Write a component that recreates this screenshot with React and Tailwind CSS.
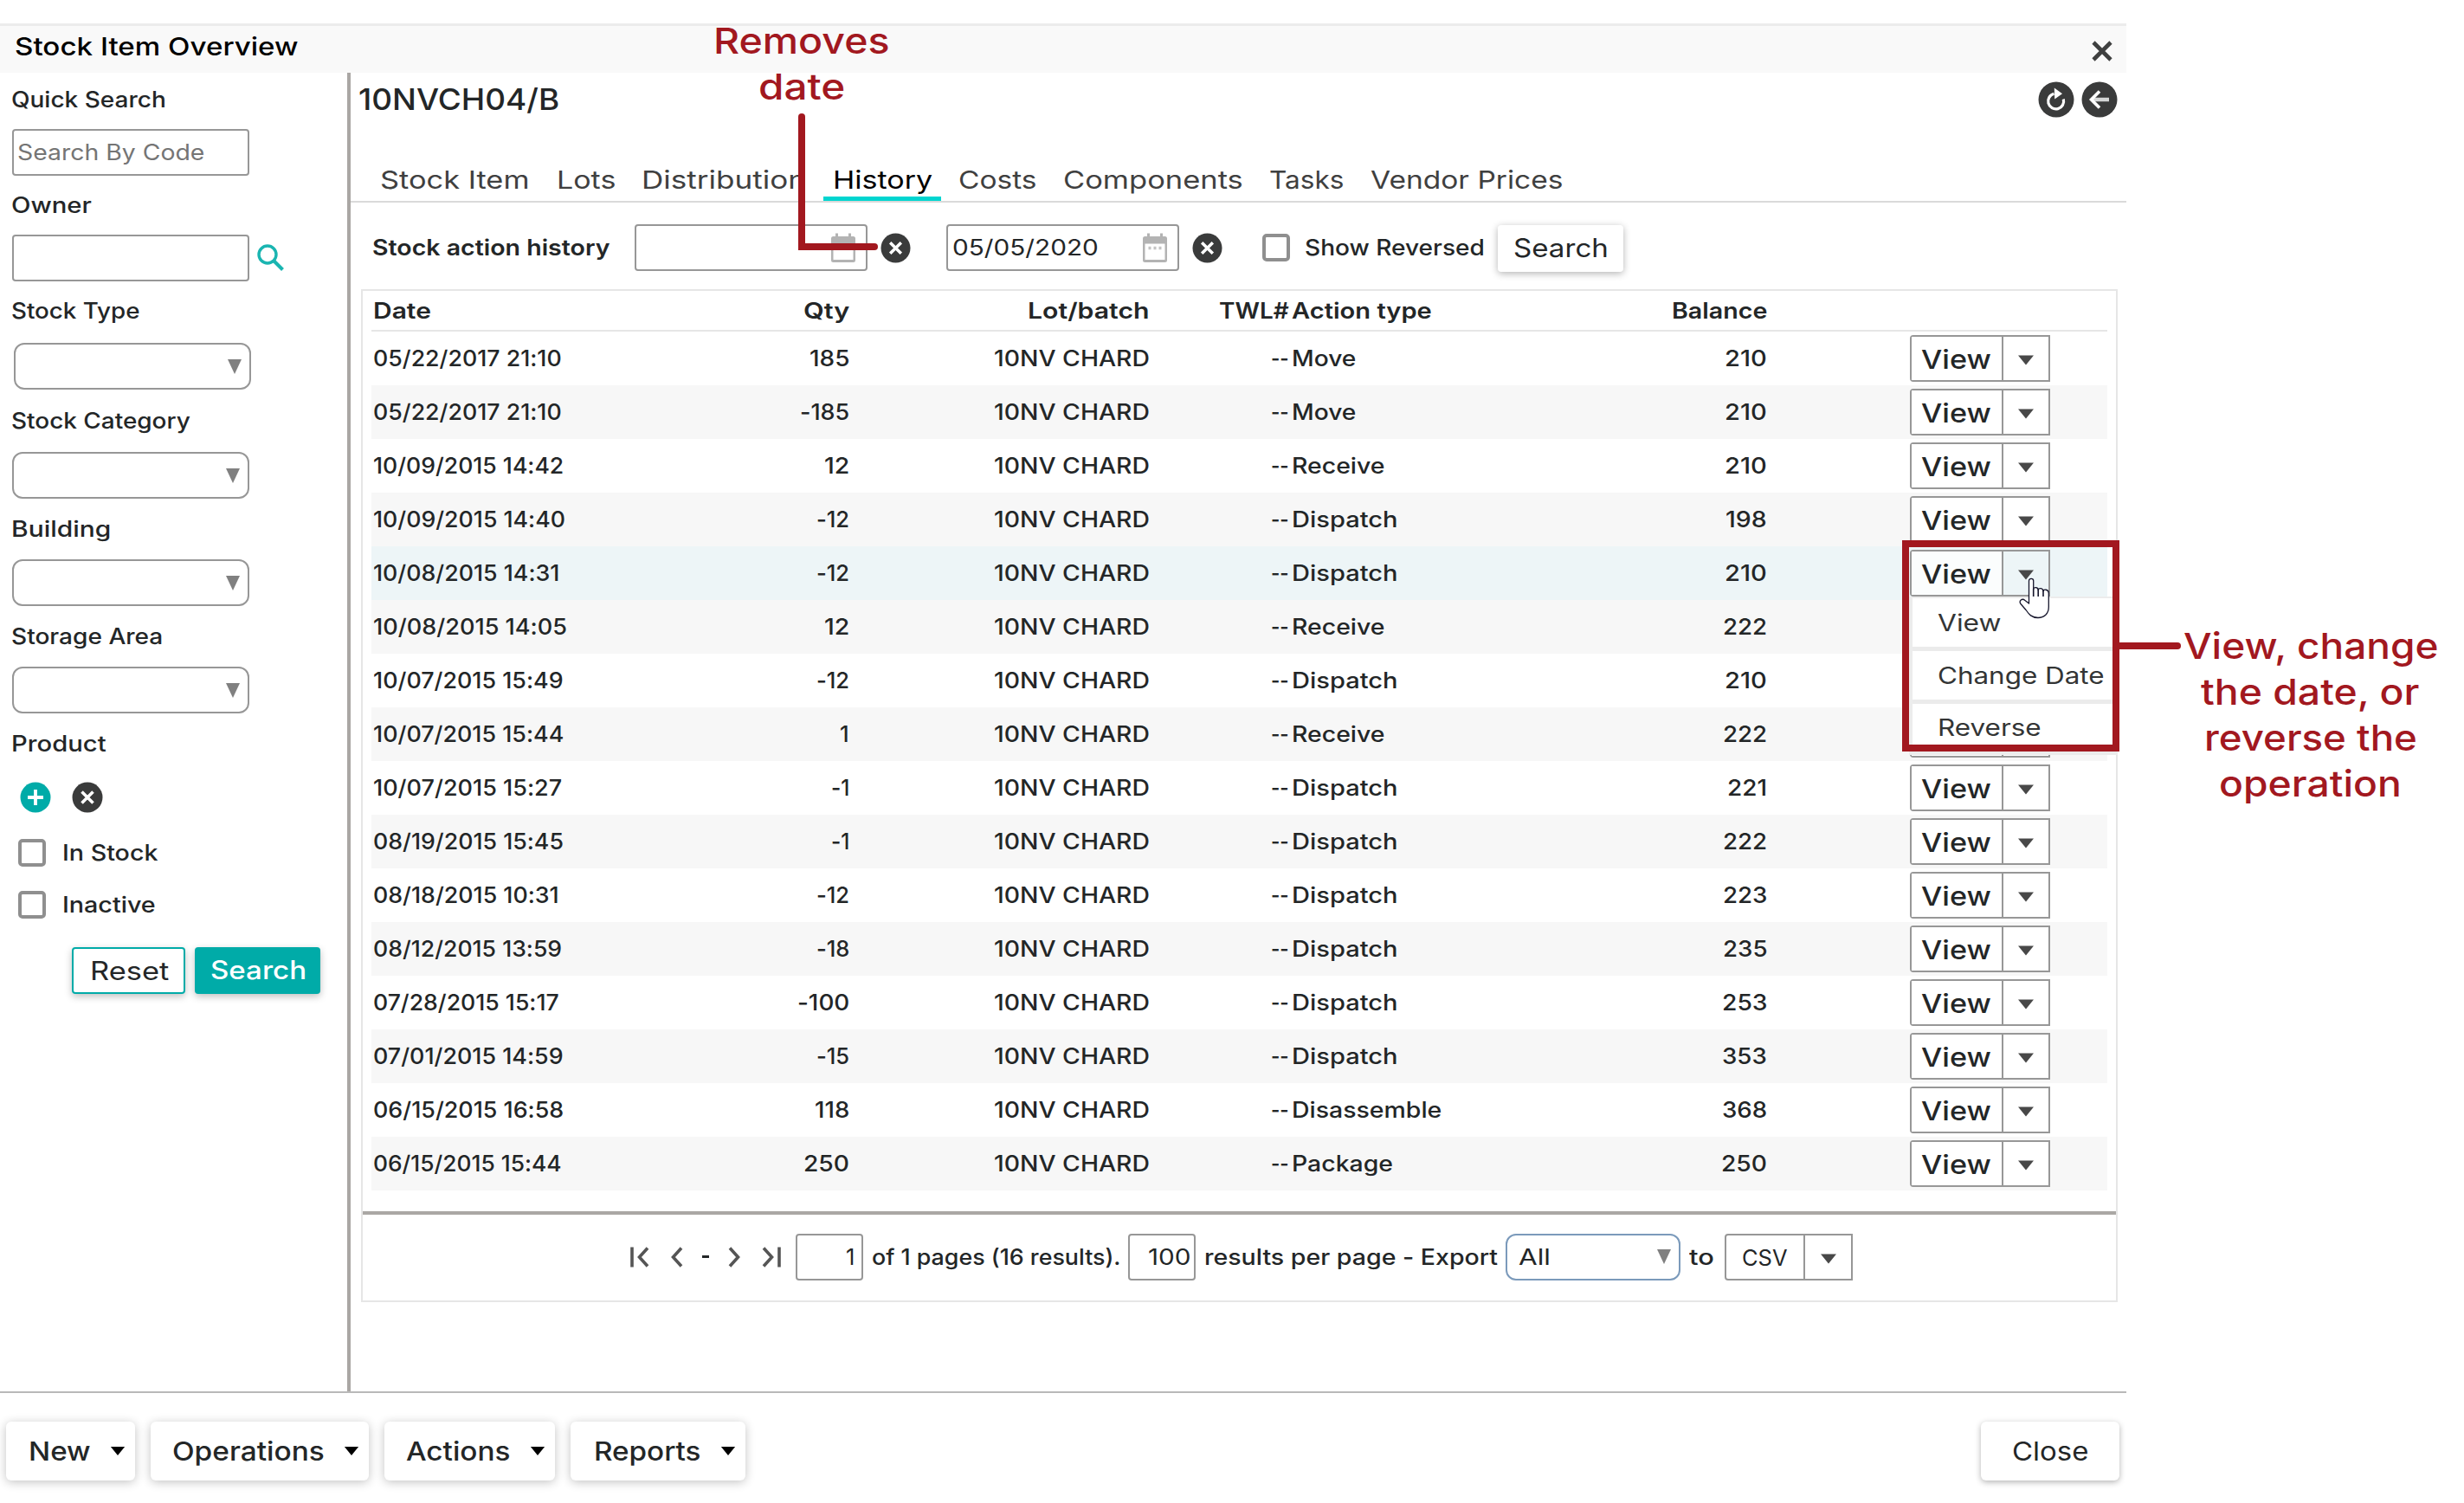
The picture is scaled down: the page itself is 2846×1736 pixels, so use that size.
import React, { useLayoutEffect, useRef, useState } from 'react';

const dateWidths = { a: 215, b: 217, c: 219, d: 212, e: 221 };

const rows = [
  { date: '05/22/2017 21:10', dw: dateWidths.a, qty: '185', type: 'Move', balance: '210' },
  { date: '05/22/2017 21:10', dw: dateWidths.a, qty: '-185', type: 'Move', balance: '210' },
  { date: '10/09/2015 14:42', dw: dateWidths.b, qty: '12', type: 'Receive', balance: '210' },
  { date: '10/09/2015 14:40', dw: dateWidths.c, qty: '-12', type: 'Dispatch', balance: '198' },
  { date: '10/08/2015 14:31', dw: dateWidths.d, qty: '-12', type: 'Dispatch', balance: '210', active: true },
  { date: '10/08/2015 14:05', dw: dateWidths.e, qty: '12', type: 'Receive', balance: '222', covered: true },
  { date: '10/07/2015 15:49', dw: dateWidths.b, qty: '-12', type: 'Dispatch', balance: '210', covered: true },
  { date: '10/07/2015 15:44', dw: dateWidths.b, qty: '1', type: 'Receive', balance: '222', covered: true },
  { date: '10/07/2015 15:27', dw: dateWidths.a, qty: '-1', type: 'Dispatch', balance: '221' },
  { date: '08/19/2015 15:45', dw: dateWidths.b, qty: '-1', type: 'Dispatch', balance: '222' },
  { date: '08/18/2015 10:31', dw: dateWidths.d, qty: '-12', type: 'Dispatch', balance: '223' },
  { date: '08/12/2015 13:59', dw: dateWidths.a, qty: '-18', type: 'Dispatch', balance: '235' },
  { date: '07/28/2015 15:17', dw: dateWidths.d, qty: '-100', type: 'Dispatch', balance: '253' },
  { date: '07/01/2015 14:59', dw: dateWidths.b, qty: '-15', type: 'Dispatch', balance: '353' },
  { date: '06/15/2015 16:58', dw: dateWidths.b, qty: '118', type: 'Disassemble', balance: '368' },
  { date: '06/15/2015 15:44', dw: dateWidths.a, qty: '250', type: 'Package', balance: '250' }
];

const textWidths = {
  Move: 71, Receive: 104, Dispatch: 120, Disassemble: 170, Package: 114,
  '185': 43, '-185': 54, '12': 26, '-12': 35, '1': 8, '-1': 18, '-18': 35, '-100': 57, '-15': 35, '118': 37, '250': 50,
  '210': 46, '198': 45, '222': 48, '221': 43, '223': 48, '235': 48, '253': 49, '353': 49, '368': 49
};

const tabs = [
  { label: 'Stock Item', w: 170 },
  { label: 'Lots', w: 65 },
  { label: 'Distribution', w: 187 },
  { label: 'History', w: 112, active: true },
  { label: 'Costs', w: 87 },
  { label: 'Components', w: 205 },
  { label: 'Tasks', w: 83 },
  { label: 'Vendor Prices', w: 220 }
];

// Widens the letters so the text takes w pixels
function Fit({ w, children }) {
  const ref = useRef(null);
  const [scale, setScale] = useState(1);

  useLayoutEffect(() => {
    if (children.length > 1) {
      setScale((w + 3) / ref.current.offsetWidth);
    }
  }, []);

  return (
    <span className="inline-flex shrink-0 whitespace-nowrap text-left" style={{ width: w }}>
      <span ref={ref} className="inline-block shrink-0 origin-left -ml-px" style={{ transform: `scaleX(${scale})` }}>
        {children}
      </span>
    </span>
  );
}

function Caret({ className = '' }) {
  return (
    <svg viewBox="0 0 20 12" className={`h-3 shrink-0 ${className}`}>
      <path d="M1 0.5H19L10 11.5Z" fill="currentColor" />
    </svg>
  );
}

function SelectArrow() {
  return (
    <svg viewBox="0 0 16 17" className="w-4 h-[17px] shrink-0 text-[#808080]">
      <path d="M0 0H16L8 17Z" fill="currentColor" />
    </svg>
  );
}

function SelectBox({ className = '' }) {
  return (
    <div className={`w-[274px] h-[54px] border-2 border-[#979797] rounded-xl flex items-center justify-end pr-[9px] ${className}`}>
      <SelectArrow />
    </div>
  );
}

function CheckBox() {
  return <div className="w-8 h-8 shrink-0 border-4 border-[#8f8f8f] rounded-[5px] bg-white" />;
}

function CircleX({ className = '' }) {
  return (
    <svg viewBox="0 0 36 36" className={`shrink-0 ${className}`}>
      <circle cx="18" cy="18" r="17.5" fill="#3a3b3b" />
      <path d="M11.5 11.5L24.5 24.5M24.5 11.5L11.5 24.5" stroke="#fff" strokeWidth="3.6" />
    </svg>
  );
}

function Calendar() {
  return (
    <svg viewBox="0 0 28 34" className="w-7 h-[34px] shrink-0">
      <path d="M5 0.5H8V4H20V0.5H23V4H25.5A2.5 2.5 0 0 1 28 6.5V31.5A2.5 2.5 0 0 1 25.5 34H2.5A2.5 2.5 0 0 1 0 31.5V6.5A2.5 2.5 0 0 1 2.5 4H5Z" fill="#b3b3b3" />
      <path d="M2.5 12.5H25.5V31H2.5Z" fill="#fff" />
      <path d="M6.5 17.5H9.5M12.5 17.5H15.5M18.5 17.5H21.5" stroke="#c4c4c4" strokeWidth="3.5" />
    </svg>
  );
}

function DateField({ value }) {
  return (
    <div className="w-[269px] h-[54px] border-2 border-[#979797] rounded-[4px] flex items-center pl-1.5 pr-3 text-[25.5px]">
      {value && <Fit w={166}>{value}</Fit>}
      <div className="ml-auto">
        <Calendar />
      </div>
    </div>
  );
}

function SplitButton({ active, covered }) {
  return (
    <div className={`w-[162px] h-[54px] border-2 border-[#979797] rounded-l-[4px] flex ${active ? 'bg-[#edf5f7]' : 'bg-white'}`}>
      <div className={`w-[106px] h-[50px] pl-3 pt-0.5 flex items-center border-r-2 border-[#979797] text-[30px] font-medium ${active ? 'bg-[#fbfdfd]' : 'bg-white'}`}>
        {!covered && <Fit w={78}>View</Fit>}
      </div>
      <div className="flex-1 flex items-center justify-center pt-[3px]">
        <Caret className="w-5 text-[#484848]" />
      </div>
    </div>
  );
}

function Sidebar() {
  return (
    <div className="w-[405px] shrink-0 border-r-4 border-[#aaa7a4] pl-3.5 text-[25.5px] font-medium">
      <div className="h-[65px] pb-[3px] flex items-center"><Fit w={176}>Quick Search</Fit></div>
      <div className="w-[274px] h-[54px] border-2 border-[#979797] rounded-[4px] flex items-center pl-[5px] text-[#757575] font-normal">
        <Fit w={213}>Search By Code</Fit>
      </div>
      <div className="h-[68px] pb-px flex items-center"><Fit w={90}>Owner</Fit></div>
      <div className="flex items-center">
        <div className="w-[274px] h-[54px] border-2 border-[#979797] rounded-[4px]" />
        <svg viewBox="0 0 32 32" className="w-8 h-8 ml-[9px] text-[#1ab5b1]" fill="none" stroke="currentColor">
          <circle cx="12" cy="12" r="10" strokeWidth="3.4" />
          <path d="M19.5 19.5L29.5 29.5" strokeWidth="4" />
        </svg>
      </div>
      <div className="h-[71px] pb-[3px] flex items-center"><Fit w={146}>Stock Type</Fit></div>
      <SelectBox className="ml-[2px]" />
      <div className="h-[72px] flex items-center"><Fit w={204}>Stock Category</Fit></div>
      <SelectBox />
      <div className="h-[70px] flex items-center"><Fit w={112}>Building</Fit></div>
      <SelectBox />
      <div className="h-[70px] flex items-center"><Fit w={172}>Storage Area</Fit></div>
      <SelectBox />
      <div className="h-[70px] flex items-center"><Fit w={107}>Product</Fit></div>
      <div className="flex mt-[9px] ml-[9px] gap-6">
        <svg viewBox="0 0 36 36" className="w-9 h-9">
          <circle cx="18" cy="18" r="17.5" fill="#00aba8" />
          <path d="M18 9V27M9 18H27" stroke="#fff" strokeWidth="3.8" />
        </svg>
        <CircleX className="w-9 h-9" />
      </div>
      <div className="flex items-center h-8 mt-[30px] ml-[7px] gap-5"><CheckBox /><Fit w={107}>In Stock</Fit></div>
      <div className="flex items-center h-8 mt-[28px] ml-[7px] gap-5"><CheckBox /><Fit w={105}>Inactive</Fit></div>
      <div className="flex mt-[33px] ml-[69px] gap-[11px] text-[29.5px]">
        <div className="w-[131px] h-[54px] rounded-[4px] border-2 border-[#00aba8] flex items-center justify-center pt-0.5 font-normal shadow-[0_3px_8px_rgba(0,0,0,0.25)]">
          <Fit w={88}>Reset</Fit>
        </div>
        <div className="w-[145px] h-[54px] rounded-[4px] bg-[#00aba8] text-white flex items-center justify-center shadow-[0_3px_8px_rgba(0,0,0,0.25)]">
          <Fit w={108}>Search</Fit>
        </div>
      </div>
    </div>
  );
}

function HistoryTable() {
  return (
    <div className="px-2.5 h-[1063px] text-[25.5px] font-medium">
      <div className="h-[47px] border-b-2 border-[#e6e6e6] grid grid-cols-[350px_200px_347px_161px_356px_196px_394px] items-center font-semibold">
        <div className="flex pl-[3px]"><Fit w={64}>Date</Fit></div>
        <div className="flex justify-end"><Fit w={50}>Qty</Fit></div>
        <div className="flex justify-end"><Fit w={138}>Lot/batch</Fit></div>
        <div className="flex justify-end"><Fit w={78}>TWL#</Fit></div>
        <div className="flex pl-1.5"><Fit w={159}>Action type</Fit></div>
        <div className="flex justify-end"><Fit w={107}>Balance</Fit></div>
      </div>
      {rows.map((row, i) => (
        <div
          key={i}
          className={`h-[62px] grid grid-cols-[350px_200px_347px_161px_356px_196px_394px] items-center ${row.active ? 'bg-[#edf5f7]' : i % 2 ? 'bg-[#f7f7f7]' : 'bg-white'}`}
        >
          <div className="flex pl-[3px]"><Fit w={row.dw}>{row.date}</Fit></div>
          <div className="flex justify-end"><Fit w={textWidths[row.qty]}>{row.qty}</Fit></div>
          <div className="flex justify-end"><Fit w={177}>10NV CHARD</Fit></div>
          <div className="flex justify-end"><Fit w={18}>--</Fit></div>
          <div className="flex pl-1.5"><Fit w={textWidths[row.type]}>{row.type}</Fit></div>
          <div className="flex justify-end"><Fit w={textWidths[row.balance]}>{row.balance}</Fit></div>
          <div className="pl-[167px]"><SplitButton active={row.active} covered={row.covered} /></div>
        </div>
      ))}
    </div>
  );
}

function Pagination() {
  return (
    <div className="h-[101px] border-t-4 border-[#aaa7a4] flex items-center pl-[309px] text-[25.5px] font-medium">
      <svg viewBox="0 0 22 24" className="w-[22px] h-6" fill="none" stroke="#555" strokeWidth="3.6">
        <path d="M2 0.5V23.5M20 1.5L10.5 12L20 22.5" />
      </svg>
      <svg viewBox="0 0 14 24" className="w-3.5 h-6 ml-[25px]" fill="none" stroke="#555" strokeWidth="3.6">
        <path d="M12 1.5L2.5 12L12 22.5" />
      </svg>
      <span className="w-[8px] h-[3px] bg-[#232627] ml-[22px]" />
      <svg viewBox="0 0 14 24" className="w-3.5 h-6 ml-[22px]" fill="none" stroke="#555" strokeWidth="3.6">
        <path d="M2 1.5L11.5 12L2 22.5" />
      </svg>
      <svg viewBox="0 0 22 24" className="w-[22px] h-6 ml-[25px]" fill="none" stroke="#555" strokeWidth="3.6">
        <path d="M20 0.5V23.5M2 1.5L11.5 12L2 22.5" />
      </svg>
      <div className="w-[78px] h-[54px] ml-[17px] border-2 border-[#979797] rounded-[4px] flex items-center justify-end pr-[9px] font-normal">
        <Fit w={8}>1</Fit>
      </div>
      <div className="ml-[11px] w-[295px] flex"><Fit w={284}>of 1 pages (16 results).</Fit></div>
      <div className="w-[78px] h-[54px] border-2 border-[#979797] rounded-[4px] flex items-center justify-end pr-[5px] font-normal">
        <Fit w={47}>100</Fit>
      </div>
      <div className="ml-[11px] w-[347px] flex"><Fit w={336}>results per page - Export</Fit></div>
      <div className="w-[202px] h-[54px] border-2 border-[#7b9abb] rounded-xl flex items-center justify-between pl-3.5 pr-[9px] font-normal">
        <Fit w={34}>All</Fit>
        <SelectArrow />
      </div>
      <div className="ml-[11px] w-10 flex"><Fit w={26}>to</Fit></div>
      <div className="w-[148px] h-[54px] border-2 border-[#979797] rounded-l-[4px] flex">
        <div className="w-[91px] border-r-2 border-[#979797] flex items-center pl-[19px] pt-[3px] text-[25px] font-normal">
          <Fit w={50}>CSV</Fit>
        </div>
        <div className="flex-1 flex items-center justify-center pt-1"><Caret className="w-5 text-[#484848]" /></div>
      </div>
    </div>
  );
}

function FooterButton({ label, w, className }) {
  return (
    <div className={`h-[68px] rounded-[6px] bg-white flex items-center justify-between pr-[11px] shadow-[0_2px_12px_rgba(0,0,0,0.24)] ${className}`}>
      <Fit w={w}>{label}</Fit>
      <Caret className="text-black w-[18px]" />
    </div>
  );
}

function ActionMenu() {
  return (
    <div className="absolute left-[2205px] top-[689px] w-[241px] h-[183px] bg-white border-t-2 border-b-4 border-l-4 border-[#ececec] text-[27px] text-[#333535]">
      <div className="h-[61px] pl-[30px] flex items-center border-b-[5px] border-[#ebebeb]"><Fit w={71}>View</Fit></div>
      <div className="h-[61px] pl-[30px] flex items-center border-b-[5px] border-[#ebebeb]"><Fit w={190}>Change Date</Fit></div>
      <div className="h-[55px] pl-[30px] flex items-center"><Fit w={117}>Reverse</Fit></div>
    </div>
  );
}

function App() {
  return (
    <div className="relative w-[2846px] h-[1736px] bg-white overflow-hidden text-[#232627] font-['Inter',sans-serif] leading-none [font-feature-settings:'calt'_0]">
      <div className="w-[2456px] flex flex-col pt-[27px]">
        <div className="h-[57px] border-t-[3px] border-[#ececec] bg-[#f9f9f9] flex items-center justify-between pl-[18px] pr-4 text-[29px] font-medium text-black">
          <div className="flex pb-[7px]"><Fit w={325}>Stock Item Overview</Fit></div>
          <svg viewBox="0 0 24 24" className="w-6 h-6 mt-[4px]" stroke="#3f4040" strokeWidth="4.6">
            <path d="M2 2L22 22M22 2L2 22" />
          </svg>
        </div>

        <div className="flex h-[1523px]">
          <Sidebar />
          <div className="flex-1">
            <div className="h-[103px] flex justify-between pt-2.5 px-2.5">
              <div className="h-[42px] flex items-center text-[34px] font-medium"><Fit w={229}>10NVCH04/B</Fit></div>
              <div className="flex gap-2">
                <svg viewBox="0 0 42 42" className="w-[42px] h-[42px]">
                  <circle cx="21" cy="21" r="20.5" fill="#3a3b3b" />
                  <path d="M29.3 20.5A9 9 0 1 1 18.5 14.2" fill="none" stroke="#fff" strokeWidth="3.2" />
                  <path d="M18.8 7.5L28 14.2L19.2 20.5Z" fill="#fff" />
                </svg>
                <svg viewBox="0 0 42 42" className="w-[42px] h-[42px]" fill="none">
                  <circle cx="21" cy="21" r="20.5" fill="#3a3b3b" />
                  <path d="M12 21H32" stroke="#d4d6d6" strokeWidth="4.5" />
                  <path d="M21 11.5L11.5 21L21 30.5" stroke="#fff" strokeWidth="3.6" />
                </svg>
              </div>
            </div>

            <div className="h-[47px] border-b-2 border-[#dadada] flex gap-[9.5px] pl-[23px] text-[29px] text-[#3f4040]">
              {tabs.map((tab) => (
                <div
                  key={tab.label}
                  className={`h-[45px] flex items-center px-3 ${tab.active ? 'border-b-[5px] border-[#00d5d0] text-black' : 'pb-[5px]'}`}
                >
                  <Fit w={tab.w}>{tab.label}</Fit>
                </div>
              ))}
            </div>

            <div className="h-[100px] flex items-center pl-[26px] pt-[4px] text-[25.5px]">
              <div className="w-[302px] flex font-semibold"><Fit w={272}>Stock action history</Fit></div>
              <DateField />
              <CircleX className="w-[35px] h-[35px] ml-[15px] mr-[41px]" />
              <DateField value="05/05/2020" />
              <CircleX className="w-[35px] h-[35px] ml-[15px] mr-[46px]" />
              <CheckBox />
              <div className="ml-[18px] w-[222px] flex font-medium"><Fit w={205}>Show Reversed</Fit></div>
              <div className="w-[145px] h-[54px] mt-0.5 rounded-[4px] bg-white flex items-center justify-center text-[29.5px] shadow-[0_2px_9px_rgba(0,0,0,0.3)]">
                <Fit w={107}>Search</Fit>
              </div>
            </div>

            <div className="ml-3 w-[2029px] h-[1170px] border-2 border-[#e6e6e6]">
              <HistoryTable />
              <Pagination />
            </div>
          </div>
        </div>

        <div className="h-[129px] border-t-2 border-[#b9b9b9] flex items-start pt-[33px] pl-[7px] pr-2 text-[30px] font-medium">
          <div className="flex gap-[18px]">
            <FooterButton label="New" w={69} className="w-[149px] pl-[27px]" />
            <FooterButton label="Operations" w={173} className="w-[252px] pl-[26px]" />
            <FooterButton label="Actions" w={117} className="w-[197px] pl-[26px]" />
            <FooterButton label="Reports" w={121} className="w-[202px] pl-[28px]" />
          </div>
          <div className="ml-auto w-[160px] h-[68px] rounded-[6px] bg-white flex items-center justify-center font-normal shadow-[0_2px_7px_rgba(0,0,0,0.3)]">
            <Fit w={86}>Close</Fit>
          </div>
        </div>
      </div>

      <ActionMenu />

      {/* hand cursor over the open menu button */}
      <svg viewBox="0 0 36 48" className="absolute left-[2332px] top-[667px] w-9 h-12">
        <path
          d="M11.5 30V3.8C11.500 0.500 16.700 0.500 16.700 3.800V13.500C16.700 10.800 22.200 10.800 22.200 14.500C22.200 11.800 28 12 28 15.800C28 13.200 34.300 13.500 34.300 18V34C34.300 42 29 46.500 22 46.500C14.500 46.500 11.500 42.500 8 37.500L2 30.500C-0.500 27 3.500 23.500 7 26.500Z"
          fill="#fff" stroke="#15152b" strokeWidth="1.3" strokeLinejoin="round"
        />
        <path d="M16.700 13V22M22.200 14V22M28 15V22" stroke="#15152b" strokeWidth="1.600" />
      </svg>

      {/* callouts */}
      <div className="absolute left-[2197px] top-[624px] w-[251px] h-[244px] border-8 border-[#a2181f]" />
      <div className="absolute left-[2446px] top-[742px] w-[73px] h-2 rounded-r-full bg-[#a2181f]" />
      <div className="absolute left-[2508px] top-[720px] w-[320px] flex flex-col items-center text-[41px] leading-[53px] font-medium text-[#a2181f]">
        <Fit w={291}>View, change</Fit>
        <Fit w={250}>the date, or</Fit>
        <Fit w={243}>reverse the</Fit>
        <Fit w={208}>operation</Fit>
      </div>

      <div className="absolute left-[925px] top-[21px] -translate-x-1/2 w-[260px] flex flex-col items-center text-[41px] leading-[53px] font-medium text-[#a2181f]">
        <Fit w={200}>Removes</Fit>
        <Fit w={97}>date</Fit>
      </div>
      <div className="absolute left-[922px] top-[131px] w-[92px] h-[158px]">
        <div className="absolute left-0 top-0 w-2 h-[158px] rounded-t-full bg-[#a2181f]" />
        <div className="absolute left-0 bottom-0 w-[92px] h-2 rounded-r-full bg-[#a2181f]" />
      </div>
    </div>
  );
}

export default App;
